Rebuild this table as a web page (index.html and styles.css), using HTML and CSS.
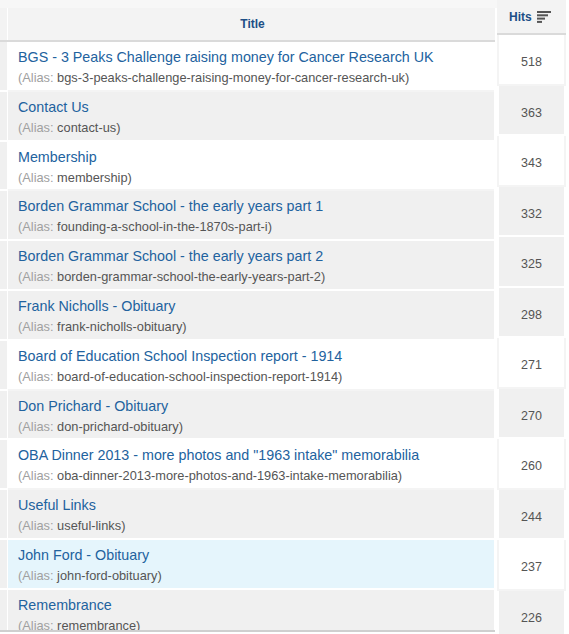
FILE: index.html
```html
<!DOCTYPE html>
<html>
<head>
<meta charset="utf-8">
<link rel="stylesheet" href="styles.css">
</head>
<body>
<div class="page">
  <div class="articles">
    <div class="thead">
      <div class="lcell"></div>
      <div class="tcell">Title</div>
    </div>
    <div class="rows">
      <div class="row"><div class="lcell"></div><div class="tcell"><a>BGS - 3 Peaks Challenge raising money for Cancer Research UK</a><div class="alias"><span class="lbl">(Alias:</span> bgs-3-peaks-challenge-raising-money-for-cancer-research-uk)</div></div></div>
      <div class="row alt"><div class="lcell"></div><div class="tcell"><a>Contact Us</a><div class="alias"><span class="lbl">(Alias:</span> contact-us)</div></div></div>
      <div class="row"><div class="lcell"></div><div class="tcell"><a>Membership</a><div class="alias"><span class="lbl">(Alias:</span> membership)</div></div></div>
      <div class="row alt"><div class="lcell"></div><div class="tcell"><a>Borden Grammar School - the early years part 1</a><div class="alias"><span class="lbl">(Alias:</span> founding-a-school-in-the-1870s-part-i)</div></div></div>
      <div class="row alt"><div class="lcell"></div><div class="tcell"><a>Borden Grammar School - the early years part 2</a><div class="alias"><span class="lbl">(Alias:</span> borden-grammar-school-the-early-years-part-2)</div></div></div>
      <div class="row alt"><div class="lcell"></div><div class="tcell"><a>Frank Nicholls - Obituary</a><div class="alias"><span class="lbl">(Alias:</span> frank-nicholls-obituary)</div></div></div>
      <div class="row"><div class="lcell"></div><div class="tcell"><a>Board of Education School Inspection report - 1914</a><div class="alias"><span class="lbl">(Alias:</span> board-of-education-school-inspection-report-1914)</div></div></div>
      <div class="row alt"><div class="lcell"></div><div class="tcell"><a>Don Prichard - Obituary</a><div class="alias"><span class="lbl">(Alias:</span> don-prichard-obituary)</div></div></div>
      <div class="row"><div class="lcell"></div><div class="tcell"><a>OBA Dinner 2013 - more photos and "1963 intake" memorabilia</a><div class="alias"><span class="lbl">(Alias:</span> oba-dinner-2013-more-photos-and-1963-intake-memorabilia)</div></div></div>
      <div class="row alt"><div class="lcell"></div><div class="tcell"><a>Useful Links</a><div class="alias"><span class="lbl">(Alias:</span> useful-links)</div></div></div>
      <div class="row hl"><div class="lcell"></div><div class="tcell"><a>John Ford - Obituary</a><div class="alias"><span class="lbl">(Alias:</span> john-ford-obituary)</div></div></div>
      <div class="row alt"><div class="lcell"></div><div class="tcell"><a>Remembrance</a><div class="alias"><span class="lbl">(Alias:</span> remembrance)</div></div></div>
    </div>
  </div>
  <div class="hits">
    <div class="hhead">Hits <svg class="sort" width="16" height="12" viewBox="0 0 16 12"><rect x="1" y="0" width="14" height="2" fill="#555"/><rect x="1" y="3.3" width="11" height="2" fill="#555"/><rect x="1" y="6.6" width="8" height="2" fill="#555"/><rect x="1" y="9.9" width="5" height="2" fill="#555"/></svg></div>
    <div class="hcell">518</div>
    <div class="hcell alt">363</div>
    <div class="hcell">343</div>
    <div class="hcell alt">332</div>
    <div class="hcell alt">325</div>
    <div class="hcell alt">298</div>
    <div class="hcell">271</div>
    <div class="hcell alt">270</div>
    <div class="hcell">260</div>
    <div class="hcell alt">244</div>
    <div class="hcell">237</div>
    <div class="hcell alt">226</div>
  </div>
</div>
</body>
</html>
```

FILE: styles.css
```css
html, body {
  margin: 0;
  padding: 0;
  background: #fff;
  height: 634px;
  overflow: hidden;
  font-family: "Liberation Sans", Arial, sans-serif;
}
.page {
  display: flex;
  align-items: flex-start;
  background: linear-gradient(#f7f7f7, #f7f7f7) no-repeat 0 0 / 497px 8px;
}
.articles {
  width: 495px;
  margin-top: 8px;
  height: 622px;
  overflow: hidden;
  border-bottom: 2px solid #cfcfcf;
}
.thead {
  display: flex;
  height: 32px;
  border-bottom: 2px solid #dadada;
  background: #f3f3f3;
}
.thead .lcell {
  width: 7px;
  border-right: 1px solid #fff;
}
.thead .tcell {
  flex: 1;
  text-align: center;
  font-weight: bold;
  font-size: 12px;
  color: #1d4f86;
  line-height: 32px;
  padding-left: 2px;
}
.row {
  display: flex;
  height: 49.8px;
  box-sizing: border-box;
  background: #fff;
}
.row .lcell {
  width: 7px;
  background: #f0f0f0;
  border-right: 1px solid #fff;
  border-bottom: 2px solid #fff;
}
.row .tcell {
  flex: 1;
  box-sizing: border-box;
  padding: 5px 0 0 10px;
  border-bottom: 2px solid #f4f4f4;
  margin-right: 1px;
}
.row.alt .tcell { background: #f0f0f0; border-bottom-color: #fff; }
.row.hl .tcell { background: #e5f5fc; border-bottom-color: #fff; }
.tcell a {
  display: block;
  font-size: 14.3px;
  line-height: 20px;
  color: #22629e;
}
.alias {
  font-size: 12.8px;
  line-height: 22px;
  color: #555;
}
.alias .lbl { color: #a0a0a0; }
.hits {
  width: 69px;
  margin-left: 2px;
}
.hhead {
  height: 33px;
  border-bottom: 2px solid #dadada;
  background: #f3f3f3;
  font-weight: bold;
  font-size: 12px;
  color: #1d4f86;
  display: flex;
  align-items: center;
  padding-left: 12px;
  gap: 4px;
}
.sort { display: block; }
.hcell {
  height: 50.5px;
  box-sizing: border-box;
  border: 2px solid #f4f4f4;
  border-top: 0;
  background: #fff;
  font-size: 12.5px;
  color: #555;
  text-align: center;
  padding-top: 20px;
  line-height: 14px;
}
.hcell.alt { background: #f0f0f0; border-color: #fff; }
```
